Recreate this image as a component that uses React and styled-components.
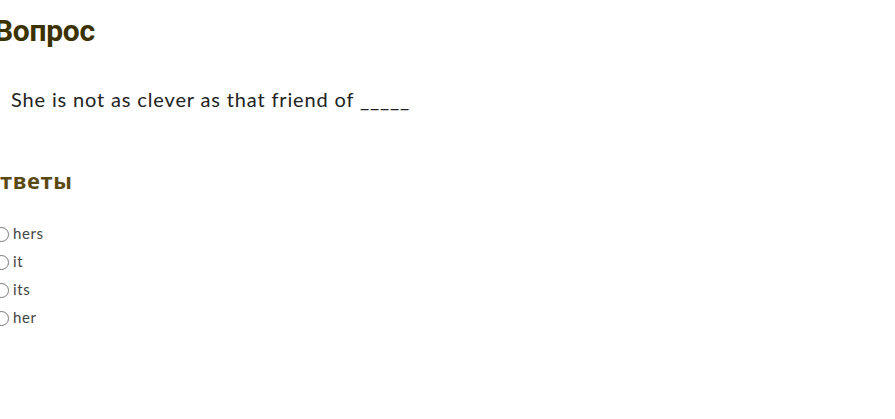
import React from 'react';
import styled, { createGlobalStyle } from 'styled-components';

const GlobalStyle = createGlobalStyle`
    html, body {
        margin: 0;
        padding: 0;
        background: #ffffff;
    }
`;

const Page = styled.div`
    width: 895px;
    height: 419px;
    overflow: hidden;
    font-family: Lato, "Open Sans", sans-serif;
`;

const Content = styled.div`
    margin-left: -6px;
    padding-top: 12px;
`;

const Title = styled.h2`
    margin: 0;
    font-family: Roboto, "Liberation Sans", sans-serif;
    font-weight: 700;
    font-size: 30px;
    line-height: 38px;
    letter-spacing: -0.3px;
    color: #3b3200;
`;

const QuestionText = styled.p`
    margin: 36px 0 0 17px;
    font-size: 20px;
    line-height: 26px;
    letter-spacing: 0.85px;
    color: #222222;
    font-weight: 400;
`;

const AnswersTitle = styled.h3`
    margin: 54px 0 0 -12px;
    font-family: "Open Sans", "Liberation Sans", sans-serif;
    font-weight: 700;
    font-size: 22px;
    line-height: 28px;
    letter-spacing: 0.5px;
    color: #5b4913;
`;

const Options = styled.div`
    margin-top: 28px;
    display: flex;
    flex-direction: column;
    gap: 6px;
`;

const Option = styled.label`
    display: flex;
    align-items: center;
    height: 22px;
    font-size: 15px;
    font-weight: 400;
    letter-spacing: 0.6px;
    color: #444444;
    cursor: pointer;
`;

const Radio = styled.input`
    appearance: none;
    box-sizing: border-box;
    width: 15px;
    height: 15px;
    margin: 3px 4px 0 0;
    border: 1px solid #7a7a7a;
    border-radius: 50%;
    background: #ffffff;
    flex-shrink: 0;

    &:checked {
        border: 4px solid #0075ff;
    }
`;

const answers = ['hers', 'it', 'its', 'her'];

export default function App() {
    return (
        <Page>
            <GlobalStyle />
            <Content>
                <Title>Вопрос</Title>
                <QuestionText>She is not as clever as that friend of _____</QuestionText>
                <AnswersTitle>Ответы</AnswersTitle>
                <Options>
                    {answers.map((answer) => (
                        <Option key={answer}>
                            <Radio type="radio" name="answer" value={answer} />
                            {answer}
                        </Option>
                    ))}
                </Options>
            </Content>
        </Page>
    );
}
